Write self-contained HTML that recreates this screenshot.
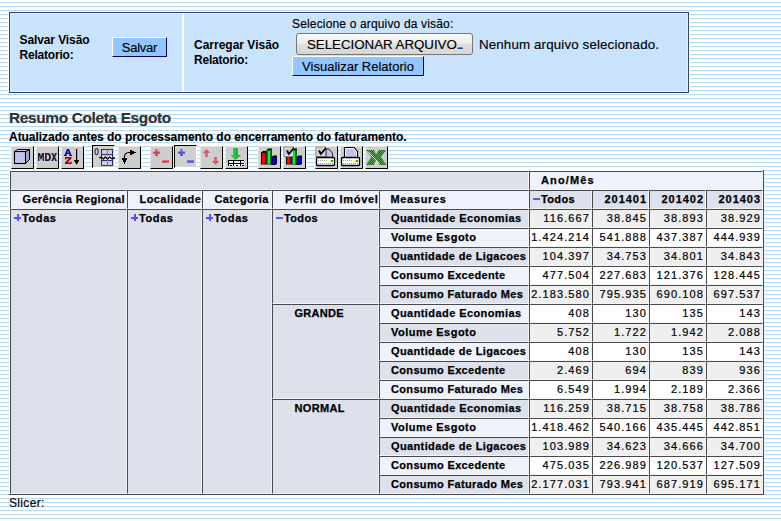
<!DOCTYPE html>
<html><head><meta charset="utf-8">
<style>
html,body{margin:0;padding:0;}
body{width:781px;height:521px;overflow:hidden;position:relative;
 background:#fff repeating-linear-gradient(to bottom,#fff 0,#fff 2px,#b9d9f0 2px,#b9d9f0 3px,#f6fafe 3px,#f6fafe 4px);
 font-family:"Liberation Sans",sans-serif;}
.a{position:absolute;}
#box{position:absolute;left:9px;top:12px;width:678px;height:79px;border:1px solid #2c4662;background:#c9e3fc;
 box-shadow:inset 1px 1px 0 #daf0ff,inset -1px -1px 0 #daf0ff,0 0 0 1px #fff;}
#div{position:absolute;left:172px;top:0;width:2px;height:79px;background:#fff;}
.lbl{position:absolute;font:bold 12px "Liberation Sans",sans-serif;line-height:15px;color:#000;white-space:nowrap;}
.btn{position:absolute;background:#93c6fe;border-top:1px solid #fff;border-left:1px solid #fff;border-right:1px solid #00005a;border-bottom:1px solid #00005a;
 font:13px "Liberation Sans",sans-serif;color:#000;text-align:center;white-space:nowrap;box-sizing:border-box;-webkit-text-stroke:.15px #000;}
.fbtn{position:absolute;left:296px;top:33px;width:177px;height:22px;box-sizing:border-box;border:1px solid #767676;border-radius:3px;
 background:linear-gradient(#f8f8f8,#eeeeee 45%,#e0e0e0 50%,#d6d6d6);font:13.33px "Liberation Sans",sans-serif;line-height:22px;text-align:center;color:#000;-webkit-text-stroke:.15px #000;}
.t{position:absolute;white-space:nowrap;-webkit-text-stroke:.15px #000;}
.tb{position:absolute;width:21px;height:21px;background:#cdcdcd;border-top:1px solid #e3e3e3;border-left:1px solid #e3e3e3;border-right:1px solid #000;border-bottom:1px solid #000;top:146px;}
.tb.p{top:145px;border-top:1px solid #000;border-left:1px solid #000;border-right:1px solid #fff;border-bottom:1px solid #fff;background:#d0d0d0;}
.tb svg{position:absolute;left:0;top:0;}
#tbl{position:absolute;left:9px;top:170px;width:754px;height:324px;background:#fff;}
#tblr{position:absolute;left:763px;top:170px;width:1px;height:325px;background:#4a4a4a;}
#tblb{position:absolute;left:9px;top:494px;width:755px;height:1px;background:#4a4a4a;}
.c{position:absolute;border-top:1px solid #4a4a4a;border-left:1px solid #4a4a4a;border-right:1px solid #f4f4f4;border-bottom:1px solid #f4f4f4;}
.b{position:absolute;-webkit-text-stroke:.25px #000;font:bold 11px "Liberation Sans",sans-serif;letter-spacing:.45px;line-height:19px;color:#000;white-space:nowrap;}
.b.nd{letter-spacing:.96px;}
.n{position:absolute;-webkit-text-stroke:.2px #000;font:11px "Liberation Sans",sans-serif;letter-spacing:1.1px;line-height:19px;color:#000;white-space:nowrap;}
.r{text-align:right;}
.plus{position:absolute;width:7px;height:7px;background:
 linear-gradient(#5252e8,#5252e8) 0 2.5px/7px 2px no-repeat,
 linear-gradient(#5252e8,#5252e8) 2.5px 0/2px 7px no-repeat;}
.minus{position:absolute;width:7px;height:2px;background:#5a5ae6;}
</style></head><body>
<div id="box">
  <div class="lbl" style="left:9.5px;top:20px;letter-spacing:-.1px">Salvar Vis&atilde;o<br><span style="letter-spacing:-.2px">Relatorio:</span></div>
  <div class="btn" style="left:102px;top:24px;width:55px;height:20px;line-height:20px;letter-spacing:-.26px">Salvar</div>
  <div id="div"></div>
  <div class="lbl" style="left:184px;top:25px">Carregar Vis&atilde;o<br><span style="letter-spacing:-.2px">Relatorio:</span></div>
  <div class="t" style="left:282px;top:4px;font:12px 'Liberation Sans',sans-serif;line-height:15px;letter-spacing:.16px">Selecione o arquivo da vis&atilde;o:</div>
  <div class="btn" style="left:282px;top:43px;width:132px;height:20px;line-height:20px">Visualizar Relatorio</div>
</div>
<div class="fbtn"><span style="letter-spacing:-.03px">SELECIONAR ARQUIVO</span><span style="letter-spacing:-1.6px;font-size:12px">...</span></div>
<div class="t" style="left:479px;top:36.5px;font:13.33px 'Liberation Sans',sans-serif;line-height:16px;letter-spacing:.14px">Nenhum arquivo selecionado.</div>

<div class="t" style="left:9px;top:108.5px;font:bold 15.4px 'Liberation Sans',sans-serif;line-height:18px;color:#333;letter-spacing:-.33px">Resumo Coleta Esgoto</div>
<div class="t" style="left:9px;top:130px;font:bold 12px 'Liberation Sans',sans-serif;line-height:15px;color:#000;letter-spacing:-.04px">Atualizado antes do processamento do encerramento do faturamento.</div>

<div class="tb" style="left:11px"><svg width="23" height="23" viewBox="0 0 23 23" style="left:-1px;top:-1px">
<polygon points="14.5,5.5 18.5,3.5 18.5,13.5 14.5,17.5" fill="#a0a0d4" stroke="#000" stroke-width="1"/>
<polygon points="3.5,5.5 6.5,3.5 18.5,3.5 14.5,5.5" fill="#d4d4f4" stroke="#000" stroke-width="1"/>
<rect x="3.5" y="5.5" width="11" height="12" fill="#c2c2ea" stroke="#000" stroke-width="1.1"/>
</svg></div>
<div class="tb" style="left:36px"><svg width="23" height="23" viewBox="0 0 23 23" style="left:-1px;top:-1px">
<path d="M2,15 V7 H4 L5,10.5 L6,7 H8 V15 H6.6 V9.8 L5.4,13.5 H4.6 L3.4,9.8 V15 Z" fill="#241c3c"/>
<path fill-rule="evenodd" d="M9,7 H11.8 Q14.9,7 14.9,11 Q14.9,15 11.8,15 H9 Z M10.7,8.5 V13.5 H11.6 Q13.1,13.5 13.1,11 Q13.1,8.5 11.6,8.5 Z" fill="#241c3c"/>
<path d="M15.2,7 H17.1 L18.1,9.6 L19.1,7 H21 L19.1,11 L21,15 H19.1 L18.1,12.4 L17.1,15 H15.2 L17.1,11 Z" fill="#241c3c"/>
</svg></div>
<div class="tb" style="left:61px"><svg width="23" height="23" viewBox="0 0 23 23" style="left:-1px;top:-1px">
<path fill-rule="evenodd" d="M6,3 H8 L10.4,9 H11 V10 H8.2 V9 H8.6 L8.2,8 H5.8 L5.4,9 H5.8 V10 H3 V9 H3.6 Z M6.2,6.8 H7.8 L7,4.6 Z" fill="#0000a8"/>
<path d="M4,11 H10.5 V12.6 L6.6,16.4 H9.2 V15.5 H10.6 V18 H4 V16.4 L7.9,12.6 H5.4 V13.4 H4 Z" fill="#a00000"/>
<rect x="15" y="3" width="1.2" height="12" fill="#000"/>
<polygon points="12.8,14 18.4,14 15.6,18.8" fill="#000"/>
</svg></div>
<div class="tb p" style="left:92px"><svg width="23" height="23" viewBox="0 0 23 23" style="left:-1px;top:-1px">
<ellipse cx="4.6" cy="6.6" rx="1.6" ry="3.1" fill="none" stroke="#2a2a80" stroke-width="1.1"/>
<rect x="9.5" y="4.5" width="11" height="16" fill="#cdcdcd" stroke="#2a2a80" stroke-width="1"/>
<line x1="9.5" y1="9.5" x2="20.5" y2="9.5" stroke="#2a2a80"/>
<line x1="9.5" y1="15.5" x2="20.5" y2="15.5" stroke="#2a2a80"/>
<line x1="15.5" y1="4.5" x2="15.5" y2="20.5" stroke="#7a7ac8"/>
<rect x="10" y="11.5" width="10" height="3" fill="#fff"/>
<path d="M7,13 L9.5,12 L11.5,14 L13.5,12 L15.5,14 L17.5,12 L19.5,13.5 L23,13" fill="none" stroke="#000" stroke-width="1.3"/>
</svg></div>
<div class="tb" style="left:118px"><svg width="23" height="23" viewBox="0 0 23 23" style="left:-1px;top:-1px">
<path d="M6.5,12 L6.5,10 Q7,7 10.5,6.5 L12.5,6.5" fill="none" stroke="#000" stroke-width="1.1"/>
<rect x="4" y="12" width="5" height="2" fill="#000"/><rect x="5" y="14" width="3" height="2" fill="#000"/><rect x="6" y="16" width="1" height="2" fill="#000"/>
<rect x="12" y="4" width="2" height="5" fill="#000"/><rect x="14" y="5" width="2" height="3" fill="#000"/><rect x="16" y="6" width="2" height="1" fill="#000"/>
</svg></div>
<div class="tb" style="left:150px"><svg width="23" height="23" viewBox="0 0 23 23" style="left:-1px;top:-1px">
<defs><linearGradient id="gf06070" x1="0" y1="0" x2="0" y2="1"><stop offset="0" stop-color="#f06070"/><stop offset="1" stop-color="#b82838"/></linearGradient></defs>
<rect x="3" y="5.4" width="7" height="2.2" fill="url(#gf06070)"/>
<rect x="5.4" y="3" width="2.2" height="7" fill="url(#gf06070)"/>
<rect x="12" y="14.2" width="7" height="2.4" fill="url(#gf06070)"/>
</svg></div>
<div class="tb p" style="left:174px"><svg width="23" height="23" viewBox="0 0 23 23" style="left:-1px;top:-1px">
<defs><linearGradient id="g7070ff" x1="0" y1="0" x2="0" y2="1"><stop offset="0" stop-color="#7070ff"/><stop offset="1" stop-color="#3434c8"/></linearGradient></defs>
<rect x="4" y="6.4" width="7" height="2.2" fill="url(#g7070ff)"/>
<rect x="6.4" y="4" width="2.2" height="7" fill="url(#g7070ff)"/>
<rect x="13" y="15.2" width="7" height="2.4" fill="url(#g7070ff)"/>
</svg></div>
<div class="tb" style="left:200px"><svg width="23" height="23" viewBox="0 0 23 23" style="left:-1px;top:-1px">
<defs><linearGradient id="gud" x1="0" y1="0" x2="1" y2="0"><stop offset="0" stop-color="#a82838"/><stop offset="0.45" stop-color="#e86070"/><stop offset="1" stop-color="#b03040"/></linearGradient></defs>
<polygon points="6.5,3 9.8,6.8 7.6,6.8 7.6,11 5.2,11 5.2,6.8 3,6.8" fill="url(#gud)"/>
<polygon points="15.6,19 19,15 16.8,15 16.8,11 14.2,11 14.2,15 12.2,15" fill="url(#gud)"/>
</svg></div>
<div class="tb" style="left:225px"><svg width="23" height="23" viewBox="0 0 23 23" style="left:-1px;top:-1px">
<defs><linearGradient id="ggr" x1="0" y1="0" x2="1" y2="0"><stop offset="0" stop-color="#30e050"/><stop offset="1" stop-color="#10a030"/></linearGradient></defs>
<polygon points="8,2 13,2 13,9 16,9 10.5,14 5,9 8,9" fill="url(#ggr)"/>
<rect x="3" y="14" width="16" height="6" fill="#000"/>
<rect x="4" y="15" width="4" height="2" fill="#e4f2ff"/><rect x="9" y="15" width="6" height="2" fill="#e4f2ff"/><rect x="16" y="15" width="3" height="2" fill="#e4f2ff"/>
<rect x="4" y="18" width="4" height="1" fill="#e4f2ff"/><rect x="9" y="18" width="6" height="1" fill="#fff"/><rect x="16" y="18" width="3" height="1" fill="#fff"/>
<rect x="4" y="19" width="1" height="1" fill="#fff"/><rect x="7" y="19" width="1" height="1" fill="#fff"/><rect x="9" y="19" width="2" height="1" fill="#fff"/><rect x="13" y="19" width="2" height="1" fill="#fff"/><rect x="16" y="19" width="1" height="1" fill="#fff"/>
</svg></div>
<div class="tb" style="left:258px"><svg width="23" height="23" viewBox="0 0 23 23" style="left:-1px;top:-1px">
<polygon points="3,6.5 5,5 8.5,5 8.5,18.5 3,18.5" fill="#000"/>
<rect x="4" y="7" width="3" height="11" fill="#ff0000"/><rect x="7" y="6" width="1.3" height="11" fill="#800000"/>
<polygon points="8.5,4 10.5,2.5 14,2.5 14,18.5 8.5,18.5" fill="#000"/>
<rect x="9.5" y="4.5" width="3" height="13.5" fill="#00ff30"/><rect x="12.5" y="3.5" width="1.3" height="13.5" fill="#008000"/>
<polygon points="13.5,11 15.5,9.5 19,9.5 19,18 17,19 13.5,19" fill="#000"/>
<rect x="14.5" y="11.5" width="3" height="6.5" fill="#0000ff"/><rect x="17.5" y="10.5" width="1.2" height="6.5" fill="#000080"/>
</svg></div>
<div class="tb" style="left:283px"><svg width="23" height="23" viewBox="0 0 23 23" style="left:-1px;top:-1px">
<polygon points="3,6.5 5,5 8.5,5 8.5,18.5 3,18.5" fill="#000"/>
<rect x="4" y="7" width="3" height="11" fill="#ff0000"/><rect x="7" y="6" width="1.3" height="11" fill="#800000"/>
<polygon points="8.5,4 10.5,2.5 14,2.5 14,18.5 8.5,18.5" fill="#000"/>
<rect x="9.5" y="4.5" width="3" height="13.5" fill="#00ff30"/><rect x="12.5" y="3.5" width="1.3" height="13.5" fill="#008000"/>
<polygon points="13.5,11 15.5,9.5 19,9.5 19,18 17,19 13.5,19" fill="#000"/>
<rect x="14.5" y="11.5" width="3" height="6.5" fill="#0000ff"/><rect x="17.5" y="10.5" width="1.2" height="6.5" fill="#000080"/>

<rect x="1" y="1" width="9.5" height="9.5" fill="#c8c8c8" stroke="#808080" stroke-width="1"/>
<rect x="2" y="2" width="7.5" height="7.5" fill="#c8c8c8" stroke="#f0f0f0" stroke-width="0.6"/>
<path d="M4,4.5 L5.8,8 L11,2" fill="none" stroke="#000" stroke-width="1.8"/>
</svg></div>
<div class="tb" style="left:315px"><svg width="23" height="23" viewBox="0 0 23 23" style="left:-1px;top:-1px">
<polygon points="11,3 14,3 17.5,7 17.5,11.5 11,11.5" fill="#c0c0e8" stroke="#000" stroke-width="0.8"/>

<rect x="1" y="1" width="9.5" height="9.5" fill="#c8c8c8" stroke="#808080" stroke-width="1"/>
<rect x="2" y="2" width="7.5" height="7.5" fill="#c8c8c8" stroke="#f0f0f0" stroke-width="0.6"/>
<path d="M4,4.5 L5.8,8 L11,2" fill="none" stroke="#000" stroke-width="1.8"/>

<rect x="1.5" y="11.5" width="18" height="8" rx="1" fill="#fff" stroke="#000" stroke-width="1.3"/>
<line x1="3" y1="14.5" x2="13" y2="14.5" stroke="#9a9a9a" stroke-dasharray="1,1"/>
<line x1="3" y1="17.5" x2="18" y2="17.5" stroke="#9a9a9a" stroke-dasharray="1,1"/>
<rect x="14" y="14" width="2" height="2" fill="#ffff00"/><rect x="16" y="14" width="2" height="2" fill="#00c000"/>
</svg></div>
<div class="tb" style="left:340px"><svg width="23" height="23" viewBox="0 0 23 23" style="left:-1px;top:-1px">
<polygon points="4.5,1.5 14,1.5 17.5,5.5 17.5,11.5 4.5,11.5" fill="#fff" stroke="#000" stroke-width="1.1"/>
<polygon points="6,3 13.5,3 16,6 16,11 6,11" fill="#c4c4ea"/>

<rect x="1.5" y="11.5" width="18" height="8" rx="1" fill="#fff" stroke="#000" stroke-width="1.3"/>
<line x1="3" y1="14.5" x2="13" y2="14.5" stroke="#9a9a9a" stroke-dasharray="1,1"/>
<line x1="3" y1="17.5" x2="18" y2="17.5" stroke="#9a9a9a" stroke-dasharray="1,1"/>
<rect x="14" y="14" width="2" height="2" fill="#ffff00"/><rect x="16" y="14" width="2" height="2" fill="#00c000"/>
</svg></div>
<div class="tb" style="left:365px"><svg width="23" height="23" viewBox="0 0 23 23" style="left:-1px;top:-1px">
<defs><pattern id="chk" x="0" y="0" width="2" height="2" patternUnits="userSpaceOnUse"><rect x="0" y="0" width="1" height="1" fill="#008000"/><rect x="1" y="1" width="1" height="1" fill="#008000"/><rect x="1" y="0" width="1" height="1" fill="#5aa05a"/><rect x="0" y="1" width="1" height="1" fill="#5aa05a"/></pattern></defs>
<polygon points="1,4 9,4 11.2,8.5 13.5,4 21,4 16,11 21.5,19 14.5,19 11.5,13.5 8.5,19 1,19 6.5,11" fill="url(#chk)"/>
<line x1="3" y1="5.5" x2="14.5" y2="18" stroke="#f0fff0" stroke-width="0.9"/>
</svg></div>

<div id="tbl"></div>
<div class="c" style="left:10px;top:171px;width:517px;height:17px;background:#dde1ec"></div>
<div class="c" style="left:529px;top:171px;width:232px;height:17px;background:#eef2fc"></div>
<div class="c" style="left:10px;top:190px;width:115px;height:17px;background:#eef2fc"></div>
<div class="c" style="left:127px;top:190px;width:73px;height:17px;background:#eef2fc"></div>
<div class="c" style="left:202px;top:190px;width:68px;height:17px;background:#eef2fc"></div>
<div class="c" style="left:272px;top:190px;width:105px;height:17px;background:#eef2fc"></div>
<div class="c" style="left:379px;top:190px;width:148px;height:17px;background:#eef2fc"></div>
<div class="c" style="left:529px;top:190px;width:61px;height:17px;background:#dde1ec"></div>
<div class="c" style="left:592px;top:190px;width:55px;height:17px;background:#dde1ec"></div>
<div class="c" style="left:649px;top:190px;width:55px;height:17px;background:#dde1ec"></div>
<div class="c" style="left:706px;top:190px;width:55px;height:17px;background:#dde1ec"></div>
<div class="c" style="left:10px;top:209px;width:115px;height:283px;background:#dde1ec"></div>
<div class="c" style="left:127px;top:209px;width:73px;height:283px;background:#dde1ec"></div>
<div class="c" style="left:202px;top:209px;width:68px;height:283px;background:#dde1ec"></div>
<div class="c" style="left:272px;top:209px;width:105px;height:93px;background:#dde1ec"></div>
<div class="c" style="left:272px;top:304px;width:105px;height:93px;background:#dde1ec"></div>
<div class="c" style="left:272px;top:399px;width:105px;height:93px;background:#dde1ec"></div>
<div class="c" style="left:379px;top:209px;width:148px;height:17px;background:#dde1ec"></div>
<div class="c" style="left:529px;top:209px;width:61px;height:17px;background:#efefef"></div>
<div class="c" style="left:592px;top:209px;width:55px;height:17px;background:#efefef"></div>
<div class="c" style="left:649px;top:209px;width:55px;height:17px;background:#efefef"></div>
<div class="c" style="left:706px;top:209px;width:55px;height:17px;background:#efefef"></div>
<div class="c" style="left:379px;top:228px;width:148px;height:17px;background:#eef2fc"></div>
<div class="c" style="left:529px;top:228px;width:61px;height:17px;background:#ffffff"></div>
<div class="c" style="left:592px;top:228px;width:55px;height:17px;background:#ffffff"></div>
<div class="c" style="left:649px;top:228px;width:55px;height:17px;background:#ffffff"></div>
<div class="c" style="left:706px;top:228px;width:55px;height:17px;background:#ffffff"></div>
<div class="c" style="left:379px;top:247px;width:148px;height:17px;background:#dde1ec"></div>
<div class="c" style="left:529px;top:247px;width:61px;height:17px;background:#efefef"></div>
<div class="c" style="left:592px;top:247px;width:55px;height:17px;background:#efefef"></div>
<div class="c" style="left:649px;top:247px;width:55px;height:17px;background:#efefef"></div>
<div class="c" style="left:706px;top:247px;width:55px;height:17px;background:#efefef"></div>
<div class="c" style="left:379px;top:266px;width:148px;height:17px;background:#eef2fc"></div>
<div class="c" style="left:529px;top:266px;width:61px;height:17px;background:#ffffff"></div>
<div class="c" style="left:592px;top:266px;width:55px;height:17px;background:#ffffff"></div>
<div class="c" style="left:649px;top:266px;width:55px;height:17px;background:#ffffff"></div>
<div class="c" style="left:706px;top:266px;width:55px;height:17px;background:#ffffff"></div>
<div class="c" style="left:379px;top:285px;width:148px;height:17px;background:#dde1ec"></div>
<div class="c" style="left:529px;top:285px;width:61px;height:17px;background:#efefef"></div>
<div class="c" style="left:592px;top:285px;width:55px;height:17px;background:#efefef"></div>
<div class="c" style="left:649px;top:285px;width:55px;height:17px;background:#efefef"></div>
<div class="c" style="left:706px;top:285px;width:55px;height:17px;background:#efefef"></div>
<div class="c" style="left:379px;top:304px;width:148px;height:17px;background:#eef2fc"></div>
<div class="c" style="left:529px;top:304px;width:61px;height:17px;background:#ffffff"></div>
<div class="c" style="left:592px;top:304px;width:55px;height:17px;background:#ffffff"></div>
<div class="c" style="left:649px;top:304px;width:55px;height:17px;background:#ffffff"></div>
<div class="c" style="left:706px;top:304px;width:55px;height:17px;background:#ffffff"></div>
<div class="c" style="left:379px;top:323px;width:148px;height:17px;background:#dde1ec"></div>
<div class="c" style="left:529px;top:323px;width:61px;height:17px;background:#efefef"></div>
<div class="c" style="left:592px;top:323px;width:55px;height:17px;background:#efefef"></div>
<div class="c" style="left:649px;top:323px;width:55px;height:17px;background:#efefef"></div>
<div class="c" style="left:706px;top:323px;width:55px;height:17px;background:#efefef"></div>
<div class="c" style="left:379px;top:342px;width:148px;height:17px;background:#eef2fc"></div>
<div class="c" style="left:529px;top:342px;width:61px;height:17px;background:#ffffff"></div>
<div class="c" style="left:592px;top:342px;width:55px;height:17px;background:#ffffff"></div>
<div class="c" style="left:649px;top:342px;width:55px;height:17px;background:#ffffff"></div>
<div class="c" style="left:706px;top:342px;width:55px;height:17px;background:#ffffff"></div>
<div class="c" style="left:379px;top:361px;width:148px;height:17px;background:#dde1ec"></div>
<div class="c" style="left:529px;top:361px;width:61px;height:17px;background:#efefef"></div>
<div class="c" style="left:592px;top:361px;width:55px;height:17px;background:#efefef"></div>
<div class="c" style="left:649px;top:361px;width:55px;height:17px;background:#efefef"></div>
<div class="c" style="left:706px;top:361px;width:55px;height:17px;background:#efefef"></div>
<div class="c" style="left:379px;top:380px;width:148px;height:17px;background:#eef2fc"></div>
<div class="c" style="left:529px;top:380px;width:61px;height:17px;background:#ffffff"></div>
<div class="c" style="left:592px;top:380px;width:55px;height:17px;background:#ffffff"></div>
<div class="c" style="left:649px;top:380px;width:55px;height:17px;background:#ffffff"></div>
<div class="c" style="left:706px;top:380px;width:55px;height:17px;background:#ffffff"></div>
<div class="c" style="left:379px;top:399px;width:148px;height:17px;background:#dde1ec"></div>
<div class="c" style="left:529px;top:399px;width:61px;height:17px;background:#efefef"></div>
<div class="c" style="left:592px;top:399px;width:55px;height:17px;background:#efefef"></div>
<div class="c" style="left:649px;top:399px;width:55px;height:17px;background:#efefef"></div>
<div class="c" style="left:706px;top:399px;width:55px;height:17px;background:#efefef"></div>
<div class="c" style="left:379px;top:418px;width:148px;height:17px;background:#eef2fc"></div>
<div class="c" style="left:529px;top:418px;width:61px;height:17px;background:#ffffff"></div>
<div class="c" style="left:592px;top:418px;width:55px;height:17px;background:#ffffff"></div>
<div class="c" style="left:649px;top:418px;width:55px;height:17px;background:#ffffff"></div>
<div class="c" style="left:706px;top:418px;width:55px;height:17px;background:#ffffff"></div>
<div class="c" style="left:379px;top:437px;width:148px;height:17px;background:#dde1ec"></div>
<div class="c" style="left:529px;top:437px;width:61px;height:17px;background:#efefef"></div>
<div class="c" style="left:592px;top:437px;width:55px;height:17px;background:#efefef"></div>
<div class="c" style="left:649px;top:437px;width:55px;height:17px;background:#efefef"></div>
<div class="c" style="left:706px;top:437px;width:55px;height:17px;background:#efefef"></div>
<div class="c" style="left:379px;top:456px;width:148px;height:17px;background:#eef2fc"></div>
<div class="c" style="left:529px;top:456px;width:61px;height:17px;background:#ffffff"></div>
<div class="c" style="left:592px;top:456px;width:55px;height:17px;background:#ffffff"></div>
<div class="c" style="left:649px;top:456px;width:55px;height:17px;background:#ffffff"></div>
<div class="c" style="left:706px;top:456px;width:55px;height:17px;background:#ffffff"></div>
<div class="c" style="left:379px;top:475px;width:148px;height:17px;background:#dde1ec"></div>
<div class="c" style="left:529px;top:475px;width:61px;height:17px;background:#efefef"></div>
<div class="c" style="left:592px;top:475px;width:55px;height:17px;background:#efefef"></div>
<div class="c" style="left:649px;top:475px;width:55px;height:17px;background:#efefef"></div>
<div class="c" style="left:706px;top:475px;width:55px;height:17px;background:#efefef"></div>
<div class="b nd" style="left:541px;top:171px;letter-spacing:1.15px;">Ano/M&ecirc;s</div>
<div class="b" style="left:22.5px;top:190px;letter-spacing:0.344px;">Ger&ecirc;ncia Regional</div>
<div class="b" style="left:139.5px;top:190px;letter-spacing:0.433px;">Localidade</div>
<div class="b" style="left:214.5px;top:190px;letter-spacing:0.4px;">Categoria</div>
<div class="b" style="left:285px;top:190px;letter-spacing:0.733px;">Perfil do Im&oacute;vel</div>
<div class="b" style="left:390.5px;top:190px;letter-spacing:0.671px;">Measures</div>
<div class="b nd r" style="right:134px;top:190px">201401</div>
<div class="b nd r" style="right:77px;top:190px">201402</div>
<div class="b nd r" style="right:20px;top:190px">201403</div>
<div class="minus" style="left:533px;top:198px"></div>
<div class="b" style="left:541px;top:190px;letter-spacing:0.375px;">Todos</div>
<div class="plus" style="left:14px;top:214px"></div>
<div class="b" style="left:22px;top:209px;letter-spacing:0.6px;">Todas</div>
<div class="plus" style="left:131px;top:214px"></div>
<div class="b" style="left:139px;top:209px;letter-spacing:0.6px;">Todas</div>
<div class="plus" style="left:206px;top:214px"></div>
<div class="b" style="left:214px;top:209px;letter-spacing:0.6px;">Todas</div>
<div class="minus" style="left:276px;top:217px"></div>
<div class="b" style="left:284px;top:209px;letter-spacing:0.375px;">Todos</div>
<div class="b" style="left:294.5px;top:304px;letter-spacing:0.3px;">GRANDE</div>
<div class="b" style="left:294.5px;top:399px;letter-spacing:0.33px;">NORMAL</div>
<div class="b" style="left:391px;top:209px;letter-spacing:0.416px;">Quantidade Economias</div>
<div class="n r" style="right:191px;top:209px">116.667</div>
<div class="n r" style="right:134px;top:209px">38.845</div>
<div class="n r" style="right:77px;top:209px">38.893</div>
<div class="n r" style="right:20px;top:209px">38.929</div>
<div class="b" style="left:391px;top:228px;letter-spacing:0.475px;">Volume Esgoto</div>
<div class="n r" style="right:191px;top:228px">1.424.214</div>
<div class="n r" style="right:134px;top:228px">541.888</div>
<div class="n r" style="right:77px;top:228px">437.387</div>
<div class="n r" style="right:20px;top:228px">444.939</div>
<div class="b" style="left:391px;top:247px;letter-spacing:0.371px;">Quantidade de Ligacoes</div>
<div class="n r" style="right:191px;top:247px">104.397</div>
<div class="n r" style="right:134px;top:247px">34.753</div>
<div class="n r" style="right:77px;top:247px">34.801</div>
<div class="n r" style="right:20px;top:247px">34.843</div>
<div class="b" style="left:391px;top:266px;letter-spacing:0.338px;">Consumo Excedente</div>
<div class="n r" style="right:191px;top:266px">477.504</div>
<div class="n r" style="right:134px;top:266px">227.683</div>
<div class="n r" style="right:77px;top:266px">121.376</div>
<div class="n r" style="right:20px;top:266px">128.445</div>
<div class="b" style="left:391px;top:285px;letter-spacing:0.342px;">Consumo Faturado Mes</div>
<div class="n r" style="right:191px;top:285px">2.183.580</div>
<div class="n r" style="right:134px;top:285px">795.935</div>
<div class="n r" style="right:77px;top:285px">690.108</div>
<div class="n r" style="right:20px;top:285px">697.537</div>
<div class="b" style="left:391px;top:304px;letter-spacing:0.416px;">Quantidade Economias</div>
<div class="n r" style="right:191px;top:304px">408</div>
<div class="n r" style="right:134px;top:304px">130</div>
<div class="n r" style="right:77px;top:304px">135</div>
<div class="n r" style="right:20px;top:304px">143</div>
<div class="b" style="left:391px;top:323px;letter-spacing:0.475px;">Volume Esgoto</div>
<div class="n r" style="right:191px;top:323px">5.752</div>
<div class="n r" style="right:134px;top:323px">1.722</div>
<div class="n r" style="right:77px;top:323px">1.942</div>
<div class="n r" style="right:20px;top:323px">2.088</div>
<div class="b" style="left:391px;top:342px;letter-spacing:0.371px;">Quantidade de Ligacoes</div>
<div class="n r" style="right:191px;top:342px">408</div>
<div class="n r" style="right:134px;top:342px">130</div>
<div class="n r" style="right:77px;top:342px">135</div>
<div class="n r" style="right:20px;top:342px">143</div>
<div class="b" style="left:391px;top:361px;letter-spacing:0.338px;">Consumo Excedente</div>
<div class="n r" style="right:191px;top:361px">2.469</div>
<div class="n r" style="right:134px;top:361px">694</div>
<div class="n r" style="right:77px;top:361px">839</div>
<div class="n r" style="right:20px;top:361px">936</div>
<div class="b" style="left:391px;top:380px;letter-spacing:0.342px;">Consumo Faturado Mes</div>
<div class="n r" style="right:191px;top:380px">6.549</div>
<div class="n r" style="right:134px;top:380px">1.994</div>
<div class="n r" style="right:77px;top:380px">2.189</div>
<div class="n r" style="right:20px;top:380px">2.366</div>
<div class="b" style="left:391px;top:399px;letter-spacing:0.416px;">Quantidade Economias</div>
<div class="n r" style="right:191px;top:399px">116.259</div>
<div class="n r" style="right:134px;top:399px">38.715</div>
<div class="n r" style="right:77px;top:399px">38.758</div>
<div class="n r" style="right:20px;top:399px">38.786</div>
<div class="b" style="left:391px;top:418px;letter-spacing:0.475px;">Volume Esgoto</div>
<div class="n r" style="right:191px;top:418px">1.418.462</div>
<div class="n r" style="right:134px;top:418px">540.166</div>
<div class="n r" style="right:77px;top:418px">435.445</div>
<div class="n r" style="right:20px;top:418px">442.851</div>
<div class="b" style="left:391px;top:437px;letter-spacing:0.371px;">Quantidade de Ligacoes</div>
<div class="n r" style="right:191px;top:437px">103.989</div>
<div class="n r" style="right:134px;top:437px">34.623</div>
<div class="n r" style="right:77px;top:437px">34.666</div>
<div class="n r" style="right:20px;top:437px">34.700</div>
<div class="b" style="left:391px;top:456px;letter-spacing:0.338px;">Consumo Excedente</div>
<div class="n r" style="right:191px;top:456px">475.035</div>
<div class="n r" style="right:134px;top:456px">226.989</div>
<div class="n r" style="right:77px;top:456px">120.537</div>
<div class="n r" style="right:20px;top:456px">127.509</div>
<div class="b" style="left:391px;top:475px;letter-spacing:0.342px;">Consumo Faturado Mes</div>
<div class="n r" style="right:191px;top:475px">2.177.031</div>
<div class="n r" style="right:134px;top:475px">793.941</div>
<div class="n r" style="right:77px;top:475px">687.919</div>
<div class="n r" style="right:20px;top:475px">695.171</div>
<div id="tblr"></div>
<div id="tblb"></div>

<div class="t" style="left:9px;top:496px;font:12px 'Liberation Sans',sans-serif;line-height:15px;color:#000;letter-spacing:.33px">Slicer:</div>
</body></html>
